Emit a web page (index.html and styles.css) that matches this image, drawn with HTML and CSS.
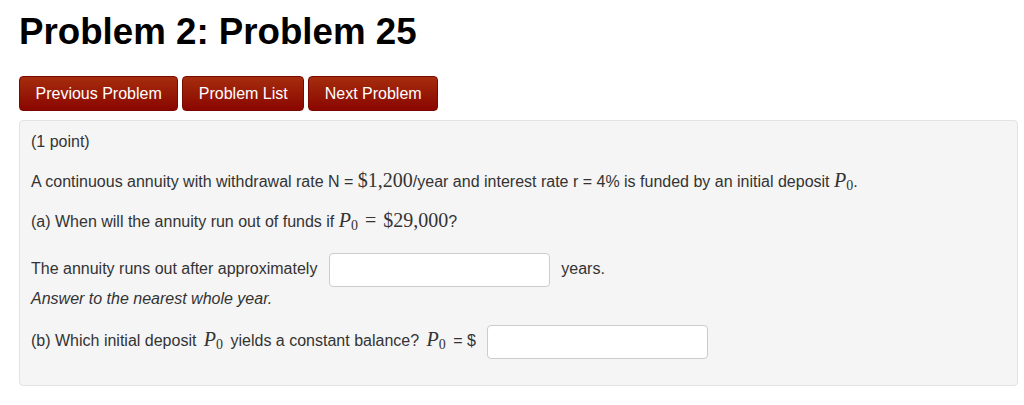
FILE: index.html
```html
<!DOCTYPE html>
<html lang="en">
<head>
    <title>Problem 25</title>
    <link rel="stylesheet" href="styles.css">
</head>
<body>
<h1>Problem 2: Problem 25</h1>

<div class="nav">
    <button class="navbtn">Previous Problem</button>
    <button class="navbtn">Problem List</button>
    <button class="navbtn">Next Problem</button>
</div>

<div class="problem">
    <p>(1 point)</p>
    <p>A continuous annuity with withdrawal rate N = <span class="math">$1,200</span>/year and interest rate r = 4% is funded by an initial deposit <span class="math"><i>P</i><sub>0</sub></span>.</p>
    <p>(a) When will the annuity run out of funds if <span class="math"><i>P</i><sub>0</sub><span class="eq">=</span>$29,000</span>?</p>
    <p class="row">The annuity runs out after approximately <input class="answer" type="text"> years.</p>
    <p class="hint">Answer to the nearest whole year.</p>
    <p class="row">(b) Which initial deposit <span class="math var"><i>P</i><sub>0</sub></span> yields a constant balance? <span class="math var"><i>P</i><sub>0</sub></span> = $ <input class="answer" type="text"></p>
</div>
</body>
</html>
```

FILE: styles.css
```css
body {
    margin: 0;
    padding: 0 6px 0 19px;
    font-family: "Liberation Sans", Arial, sans-serif;
    font-size: 16px;
    color: #333;
    background: #fff;
}
h1 {
    margin: 0;
    padding-top: 10px;
    height: 66px;
    font-size: 36.7px;
    font-weight: bold;
    color: #000;
    line-height: 44px;
}
.nav {
    display: flex;
    gap: 4px;
    height: 44px;
}
.navbtn {
    height: 35px;
    padding: 0 15.5px;
    border: 1px solid #7a0a00;
    border-radius: 4px;
    background: linear-gradient(#a52d0d, #8a0600);
    color: #fff;
    font-family: "Liberation Sans", Arial, sans-serif;
    font-size: 16px;
}
.problem {
    height: 266px;
    box-sizing: border-box;
    padding: 10px 11px;
    background: #f5f5f5;
    border: 1px solid #e3e3e3;
    border-radius: 4px;
}
.problem p {
    margin: 0 0 18px 0;
    line-height: 21px;
}
.problem p.row {
    margin: 0;
    line-height: 38px;
}
.problem p.hint {
    font-style: italic;
    margin: 0 0 11px 0;
}
.math {
    font-family: "Liberation Serif", "DejaVu Serif", serif;
    font-size: 20px;
}
.math.var {
    margin: 0 3px;
}
.math sub {
    font-size: 14px;
    vertical-align: -3px;
    line-height: 0;
}
.eq {
    padding: 0 7px;
}
.answer {
    width: 221px;
    height: 34px;
    box-sizing: border-box;
    margin: 0 7px;
    vertical-align: middle;
    border: 1px solid #ccc;
    border-radius: 4px;
    background: #fff;
}
```
